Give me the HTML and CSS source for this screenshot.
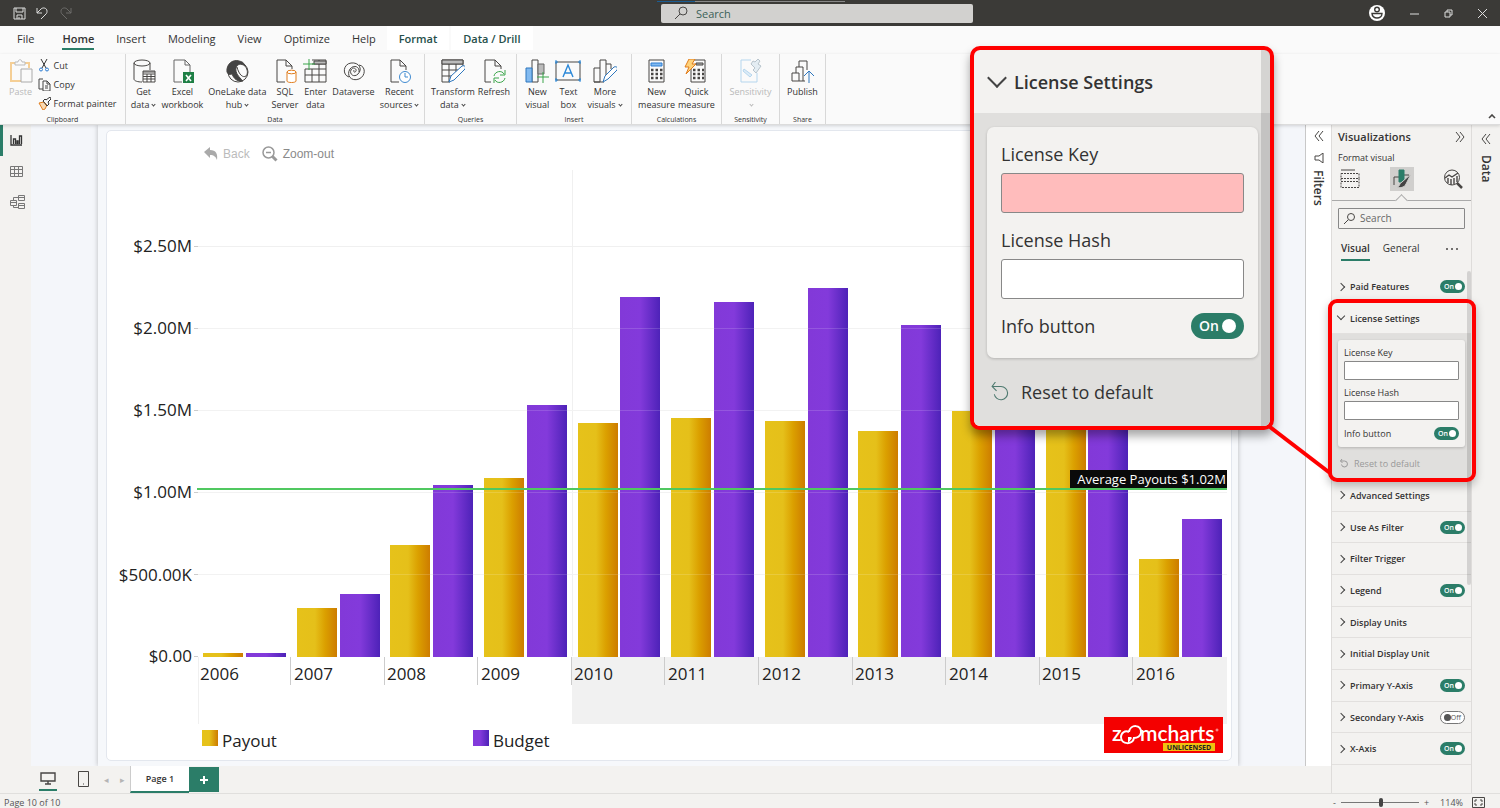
FILE: index.html
```html
<!DOCTYPE html>
<html lang="en">
  <head>
    <meta charset="utf-8" />
    <title>Report</title>
    <link rel="stylesheet" href="styles.css">
  </head>

  <body>
    <header class="titlebar">
      <div class="quick">
        <button aria-label="Save"><svg width="13" height="13" viewBox="0 0 13 13"><path d="M1 1h11v11H1zM3 1v4h7V1M4 12V8h5v4M6 10v2" /></svg></button>
        <button aria-label="Undo"><svg width="13" height="13" viewBox="0 0 13 13"><path d="M1 1v5h5M1 6l4-4c2-2 6-1 6 2 0 1 0 2-1 3l-5 5" /></svg></button>
        <button aria-label="Redo" class="dim"><svg width="13" height="13" viewBox="0 0 13 13"><path d="M12 1v5H7M12 6L8 2C6 0 2 1 2 4c0 1 0 2 1 3l5 5" /></svg></button>
      </div>
      <label class="top-search">
        <svg width="14" height="14" viewBox="0 0 14 14"><circle cx="9" cy="5" r="4" /><path d="M6 8l-5 5" /></svg>
        <input type="text" placeholder="Search" aria-label="Search" />
      </label>
      <div class="window-buttons">
        <button aria-label="Account"><svg width="16" height="16" viewBox="0 0 16 16"><circle cx="8" cy="8" r="8" fill="#fff" stroke="none" /><circle cx="8" cy="4.500" r="2.300" stroke="#3b3a37" stroke-width="1.400" /><path d="M3 8.500h10c0 6-10 6-10 0z" stroke="#3b3a37" stroke-width="1.400" /></svg></button>
        <button aria-label="Minimize"><svg width="9" height="9" viewBox="0 0 9 9"><path d="M0 5h9" /></svg></button>
        <button aria-label="Restore"><svg width="9" height="9" viewBox="0 0 9 9"><path d="M1 3h5v5H1zM3 3V1h5v5H6" /></svg></button>
        <button aria-label="Close"><svg width="9" height="9" viewBox="0 0 9 9"><path d="M0 0l9 9M9 0L0 9" /></svg></button>
      </div>
    </header>

    <nav class="tabs">
      <button>File</button>
      <button class="active">Home</button>
      <button>Insert</button>
      <button>Modeling</button>
      <button>View</button>
      <button>Optimize</button>
      <button>Help</button>
      <button class="context">Format</button>
      <button class="context">Data / Drill</button>
    </nav>

    <section class="ribbon">
      <div class="group clipboard">
        <div class="items">
          <button class="tool disabled">
            <svg width="24" height="24" viewBox="0 0 24 24"><path d="M6 4H2v18h10M16 4h4v5" stroke="#f5cf96" stroke-width="2" /><path d="M6 6V3h3c0-3 4-3 4 0h3v3z" stroke="#bbb" /><path d="M12 10h11v13H12z" stroke="#aaa" fill="#fafafa" /></svg>
            <span>Paste</span>
          </button>
          <div class="stack">
            <button><svg width="13" height="13" viewBox="0 0 13 13"><path d="M3 0l5 9M9 0L4 9" stroke="#333" /><circle cx="3" cy="10.500" r="1.500" stroke="#2b7cd3" /><circle cx="9" cy="10.500" r="1.500" stroke="#2b7cd3" /></svg>Cut</button>
            <button><svg width="13" height="13" viewBox="0 0 13 13"><path d="M5 11H1V1h4M5 3h4l3 3v7H5zM9 3v3h3M7 8h3M7 10h3" stroke="#444" /></svg>Copy</button>
            <button><svg width="13" height="13" viewBox="0 0 13 13"><path d="M1 6l5-1 3 3-2 4-2 1z" stroke="#e07c1c" fill="#fbd9b0" /><path d="M5 4l4 5 2-2-1-2 3-3-1-2-4 3-1-1z" stroke="#333" /></svg>Format painter</button>
          </div>
        </div>
        <small>Clipboard</small>
      </div>

      <div class="group data-group">
        <div class="items">
          <button class="tool"><svg width="24" height="24" viewBox="0 0 24 24"><ellipse cx="10" cy="4" rx="8" ry="3" /><path d="M2 4v16c0 2 4 3 8 3M18 4v7" /><path d="M11 12h12v11H11z" fill="#fff" /><path d="M11 15h12M11 17.500h12M11 20h12M15 15v8M19 15v8M11 13h12" /></svg><span>Get<br />data<i class="down"></i></span></button>
          <button class="tool"><svg width="24" height="24" viewBox="0 0 24 24"><path d="M12 23H4V1h11l5 5v7M15 1v5h5" stroke="#666" /><path d="M13 13h11v11H13z" fill="#1e7f45" stroke="none" /><path d="M16 16l5 6M21 16l-5 6" stroke="#fff" stroke-width="1.600" /></svg><span>Excel<br />workbook</span></button>
          <button class="tool"><svg width="24" height="24" viewBox="0 0 24 24"><circle cx="13" cy="13" r="10" /><path d="M2 13C1 5 8 0 14 2c4 1 4 1 6 5-4-3-8-2-9 2-1 5 3 9 7 13-8 1-10-5-11-7-1 0-3 2-5-2z" fill="#444" /><path d="M12 8c2 8 6 11 9 9M20 7c3 4 3 8 1 10" /></svg><span>OneLake data<br />hub<i class="down"></i></span></button>
          <button class="tool"><svg width="24" height="24" viewBox="0 0 24 24"><path d="M12 23H4V1h9l6 6v3M13 1v6h6" /><path d="M14 13v9c0 2 9 2 9 0v-9" stroke="#e07c1c" fill="#fff" /><ellipse cx="18.500" cy="13" rx="4.500" ry="1.800" stroke="#e07c1c" fill="#fff" /></svg><span>SQL<br />Server</span></button>
          <button class="tool"><svg width="24" height="24" viewBox="0 0 24 24"><path d="M9 1h14v22H2V10h21M2 16h21M9 10v13M16 1v22M9 5h14" /><path d="M11 2h12v3H11z" fill="#bbb" /><path d="M6 0v11M0 5h12" stroke="#3aa54a" /></svg><span>Enter<br />data</span></button>
          <button class="tool"><svg width="24" height="24" viewBox="0 0 24 24"><path d="M7 18c-7-2-6-13 2-14 8-1 12 6 7 11-4 4-9 0-7-4 2-4 6-1 5 1s-3 1-2-1" /><path d="M17 6c7 1 7 11 0 14-8 3-13-4-9-10 4-5 10-2 9 3" /></svg><span>Dataverse</span></button>
          <button class="tool"><svg width="24" height="24" viewBox="0 0 24 24"><path d="M12 23H4V1h9l6 6v4M13 1v6h6" /><circle cx="18" cy="18" r="5.500" stroke="#3f8ad0" fill="#fff" /><path d="M18 14v4h3" stroke="#3f8ad0" /></svg><span>Recent<br />sources<i class="down"></i></span></button>
        </div>
        <small>Data</small>
      </div>

      <div class="group queries">
        <div class="items">
          <button class="tool"><svg width="24" height="24" viewBox="0 0 24 24"><path d="M9 23H1V1h21v9M1 5h21M1 11h16M1 17h10M8 5v18M15 5v8" /><path d="M1 1h21v4H1z" fill="#bbb" /><path d="M8 23l2-6L21 7c3-1 4 1 3 3L13 21z" stroke="#2f77bd" fill="#fff" /></svg><span>Transform<br />data<i class="down"></i></span></button>
          <button class="tool"><svg width="24" height="24" viewBox="0 0 24 24"><path d="M9 23H3V1h10l6 6v3M13 1v6h6" /><path d="M12 17c1-5 8-6 10-2M23 11v5h-5M23 19c-1 5-8 6-10 2M12 24v-5h5" stroke="#3aa54a" /></svg><span>Refresh</span></button>
        </div>
        <small>Queries</small>
      </div>

      <div class="group insert">
        <div class="items">
          <button class="tool"><svg width="24" height="24" viewBox="0 0 24 24"><path d="M7 23V1h6v22z" /><path d="M1 9h6v14H1z" fill="#82baf0" stroke="#2f77bd" /><path d="M13 5h6v10h-6z" fill="#bbb" stroke="#666" /><path d="M18 13v11M12 18h12" stroke="#3aa54a" /></svg><span>New<br />visual</span></button>
          <button class="tool"><svg width="26" height="24" viewBox="0 0 26 24"><path d="M1 3h24v18H1z" /><path d="M0 2h2v2H0zM24 2h2v2h-2zM0 20h2v2H0zM24 20h2v2h-2z" stroke="#2b88d8" /><path d="M8 18L13 6l5 12M10 14h6" stroke="#2b88d8" stroke-width="1.400" /></svg><span>Text<br />box</span></button>
          <button class="tool"><svg width="24" height="24" viewBox="0 0 24 24"><path d="M7 23V1h6v18M7 23H1V9h6M13 5h5v5M1 23h10" /><path d="M10 23l2-6 9-9c3-1 4 1 3 3l-9 9z" stroke="#2f77bd" fill="#fff" /></svg><span>More<br />visuals<i class="down"></i></span></button>
        </div>
        <small>Insert</small>
      </div>

      <div class="group calc">
        <div class="items">
          <button class="tool"><svg width="24" height="24" viewBox="0 0 24 24"><path d="M4 1h15v22H4z" /><path d="M6 4h11v3H6z" fill="#82baf0" stroke="#2b7cd3" /><path d="M6 11h12M6 15h12M6 19h12" stroke-width="2.500" stroke-dasharray="2.500 2" /></svg><span>New<br />measure</span></button>
          <button class="tool"><svg width="24" height="24" viewBox="0 0 24 24"><path d="M7 1h14v22H7z" /><path d="M12 4h7v2h-7z" fill="#bbb" /><path d="M9 11h11M9 15h11M9 19h11" stroke-width="2.500" stroke-dasharray="2.500 2" /><path d="M5 0h6L8 5h4L2 15l3-7H1z" stroke="#e07c1c" fill="#ffd27a" /></svg><span>Quick<br />measure</span></button>
        </div>
        <small>Calculations</small>
      </div>

      <div class="group sens">
        <div class="items">
          <button class="tool disabled"><svg width="24" height="24" viewBox="0 0 24 24"><path d="M13 1H3v22h16V14" stroke="#b5d6ee" /><path d="M13 5l4 4-2 2 3 3 5-7-3-2 2-3-2-2-3 3-2-1z" stroke="#b8c4cc" fill="#e4edf3" /><path d="M6 10l8 6-2 2-7-6z" stroke="#b5d6ee" fill="#dcebf6" /></svg><span>Sensitivity<br /><i class="down"></i></span></button>
        </div>
        <small>Sensitivity</small>
      </div>

      <div class="group share">
        <div class="items">
          <button class="tool"><svg width="24" height="24" viewBox="0 0 24 24"><path d="M9 8V2h8v9M6 14V8h7v14M2 14h7v8H2zM9 22h6" /><path d="M19 24V12M14 17l5-5 5 5" stroke="#2f77bd" /></svg><span>Publish</span></button>
        </div>
        <small>Share</small>
      </div>
      <button class="collapse" aria-label="Collapse ribbon"><svg width="8" height="5" viewBox="0 0 8 5"><path d="M1 4l3-3 3 3" stroke-width="1.600" /></svg></button>
    </section>

    <main class="workspace">
      <div class="left">
        <div class="editor">
          <nav class="rail">
            <button class="active" aria-label="Report view"><svg width="13" height="13" viewBox="0 0 13 13"><path d="M1 1v10h11M3.500 10V5h2v5M7 10V7h1v3M9.500 10V2h2v8" stroke-width="1.300" /></svg></button>
            <button aria-label="Table view"><svg width="13" height="13" viewBox="0 0 13 13"><path d="M.5 1.500h12v10H.5zM0 4.500h13M0 8.500h13M4.500 1v11M8.500 1v11" /></svg></button>
            <button aria-label="Model view"><svg width="15" height="15" viewBox="0 0 15 15"><path d="M.5 5.500h6v5h-6zM0 7.500h6M8.500.5h6v5h-6zM8 2.500h6M8.500 8.500h6v5h-6zM8 10.500h6M3.500 5V2.500h5M3.500 10v2.500h5" /></svg></button>
          </nav>

          <div class="canvas">
            <div class="sheet">
              <div class="card">
                <div class="chart-tools">
                  <button class="back"><svg width="14" height="14" viewBox="0 0 14 14"><path d="M0 5l6-5v3c6 0 8 4 7 10-1-3-3-5-7-5v3z" fill="#aaa" stroke="none" /></svg>Back</button>
                  <button><svg width="16" height="16" viewBox="0 0 16 16"><circle cx="6.500" cy="6.500" r="5.500" stroke-width="1.500" /><path d="M4 6.500h5" stroke-width="1.500" /><path d="M10.500 10.500l4 4" stroke-width="3" /></svg>Zoom-out</button>
                </div>

                <svg class="chart" viewBox="107 165 1124 560" role="img" aria-label="Payout and budget by year">
                  <defs>
                    <linearGradient id="gold"><stop offset="0" stop-color="#e6c21a" /><stop offset=".45" stop-color="#e5c01a" /><stop offset=".7" stop-color="#dba000" /><stop offset="1" stop-color="#cd7c00" /></linearGradient>
                    <linearGradient id="violet"><stop offset="0" stop-color="#8239d8" /><stop offset=".5" stop-color="#833adb" /><stop offset="1" stop-color="#4d22b8" /></linearGradient>
                  </defs>
                  <rect class="shade" x="572" y="657" width="655" height="67" />
                  <path class="grid" d="M198 574.500h1029M198 492.500h1029M198 410.500h1029M198 328.500h1029M198 246.500h1029M572.500 170v486M198.500 657v67" />
                  <path class="tick" d="M194 656.500h4M194 574.500h4M194 492.500h4M194 410.500h4M194 328.500h4M194 246.500h4" />
                  <path class="tick" d="M290.500 657v28M384.500 657v28M477.500 657v28M571.500 657v28M664.500 657v28M758.500 657v28M852.500 657v28M945.500 657v28M1039.500 657v28M1132.500 657v28" />

                  <g fill="url(#gold)">
                    <rect x="203" y="653" width="40" height="4" />
                    <rect x="297" y="608" width="40" height="49" />
                    <rect x="390" y="545" width="40" height="112" />
                    <rect x="484" y="478" width="40" height="179" />
                    <rect x="578" y="423" width="40" height="234" />
                    <rect x="671" y="418" width="40" height="239" />
                    <rect x="765" y="421" width="40" height="236" />
                    <rect x="858" y="431" width="40" height="226" />
                    <rect x="952" y="411" width="40" height="246" />
                    <rect x="1046" y="404" width="40" height="253" />
                    <rect x="1139" y="559" width="40" height="98" />
                  </g>
                  <g fill="url(#violet)">
                    <rect x="246" y="653" width="40" height="4" />
                    <rect x="340" y="594" width="40" height="63" />
                    <rect x="433" y="485" width="40" height="172" />
                    <rect x="527" y="405" width="40" height="252" />
                    <rect x="620" y="297" width="40" height="360" />
                    <rect x="714" y="302" width="40" height="355" />
                    <rect x="808" y="288" width="40" height="369" />
                    <rect x="901" y="325" width="40" height="332" />
                    <rect x="995" y="330" width="40" height="327" />
                    <rect x="1088" y="340" width="40" height="317" />
                    <rect x="1182" y="519" width="40" height="138" />
                  </g>
                  <path class="grid over" d="M198 574.500h1029M198 492.500h1029M198 410.500h1029M198 328.500h1029" />
                  <path class="average" d="M197 489h1030" />
                  <rect x="1070" y="470" width="157" height="18" fill="#0a0a0a" />
                  <text class="average-text" x="1226" y="484">Average Payouts $1.02M</text>

                  <g class="y-labels">
                    <text x="192" y="252">$2.50M</text>
                    <text x="192" y="334">$2.00M</text>
                    <text x="192" y="416">$1.50M</text>
                    <text x="192" y="498">$1.00M</text>
                    <text x="192" y="581">$500.00K</text>
                    <text x="192" y="662">$0.00</text>
                  </g>
                  <g class="x-labels">
                    <text x="200" y="680">2006</text>
                    <text x="294" y="680">2007</text>
                    <text x="387" y="680">2008</text>
                    <text x="481" y="680">2009</text>
                    <text x="574" y="680">2010</text>
                    <text x="668" y="680">2011</text>
                    <text x="762" y="680">2012</text>
                    <text x="855" y="680">2013</text>
                    <text x="949" y="680">2014</text>
                    <text x="1042" y="680">2015</text>
                    <text x="1136" y="680">2016</text>
                  </g>
                </svg>

                <div class="legend">
                  <span><i class="swatch gold"></i>Payout</span>
                  <span><i class="swatch violet"></i>Budget</span>
                </div>

                <svg class="logo" width="119" height="36" viewBox="0 0 119 36" role="img" aria-label="ZoomCharts unlicensed">
                  <rect width="119" height="36" fill="#f40000" />
                  <text x="8" y="24" class="logo-text">z</text>
                  <path d="M25 15c-4-2-8 1-8 5 0 8 12 8 13 1 4 0 6-2 7-5 1-9-11-9-12-1" stroke="#fff" stroke-width="2" />
                  <path d="M24 20v5h1l3-4-1-1z" fill="#fff" stroke="none" />
                  <text x="36" y="24" class="logo-text">mcharts</text>
                  <circle cx="113" cy="13" r="1" stroke="#ffb0b0" />
                  <rect x="59" y="26" width="52" height="8" fill="#f0c010" />
                  <text x="85" y="33" class="logo-tag">UNLICENSED</text>
                </svg>
              </div>
            </div>
          </div>

          <aside class="filters">
            <button aria-label="Expand filters"><svg width="10" height="10" viewBox="0 0 10 10"><path d="M5 0L1 5l4 5M9 0L5 5l4 5" /></svg></button>
            <svg width="10" height="10" viewBox="0 0 10 10"><path d="M9 0v10L5 7H1V3h4z" /></svg>
            <span>Filters</span>
          </aside>
        </div>

        <footer class="pagebar">
          <button class="device active" aria-label="Desktop layout"><svg width="16" height="13" viewBox="0 0 16 13"><path d="M1 1h14v8H1zM8 9v3M5 12h6" stroke-width="1.400" /></svg></button>
          <button class="device" aria-label="Mobile layout"><svg width="11" height="16" viewBox="0 0 11 16"><path d="M.5.5h10v15H.5zM5 13h1" /></svg></button>
          <button class="arrow" aria-label="Previous page">◂</button>
          <button class="arrow" aria-label="Next page">▸</button>
          <button class="page">Page 1</button>
          <button class="add" aria-label="New page"><svg width="10" height="10" viewBox="0 0 10 10"><path d="M5 1v8M1 5h8" stroke="#fff" stroke-width="2" /></svg></button>
        </footer>
      </div>

      <aside class="viz">
        <div class="viz-head">
          <h2>Visualizations</h2>
          <button aria-label="Collapse pane"><svg width="10" height="10" viewBox="0 0 10 10"><path d="M1 0l4 5-4 5M5 0l4 5-4 5" /></svg></button>
        </div>
        <p>Format visual</p>
        <div class="modes">
          <button aria-label="Build visual"><svg width="20" height="20" viewBox="0 0 20 20"><path d="M1 1h14" /><path d="M1 4.500h18v5H1zM1 12.500h18v6H1zM1 9.500v3M19 9.500v3" stroke-dasharray="2 1" /></svg></button>
          <button class="active" aria-label="Format visual"><svg width="20" height="20" viewBox="0 0 20 20"><path d="M2 16V8h5M12 6h5v2" /><path d="M7 1h5v12H7z" fill="#2b7d68" stroke="#2b7d68" /><path d="M5 18c3 0 2-4 5-5l9-8-5 10c-2 4-6 4-9 3z" fill="#444" stroke="#d0cfcd" /></svg></button>
          <button aria-label="Analytics"><svg width="20" height="20" viewBox="0 0 20 20"><circle cx="9" cy="8.500" r="7.500" /><path d="M2 9l4-3 3 2 6-4M5 9v5M8 10v6M11 9v6M14 7v6" stroke-width="1.400" /><path d="M14 14l5 5" stroke-width="2.500" /></svg></button>
        </div>
        <label class="viz-search">
          <svg width="11" height="11" viewBox="0 0 11 11"><circle cx="7" cy="4" r="3.500" /><path d="M4 7l-4 4" /></svg>
          <input type="text" placeholder="Search" aria-label="Search settings" />
        </label>
        <div class="viz-tabs">
          <button class="active">Visual</button>
          <button>General</button>
          <button class="more" aria-label="More options"><svg width="12" height="2" viewBox="0 0 12 2"><path d="M0 1h2M5 1h2M10 1h2" stroke-width="1.500" /></svg></button>
        </div>

        <div class="settings">
          <div class="row first"><button><i class="chev"></i>Paid Features</button><label class="toggle">On<input type="checkbox" checked aria-label="Paid Features" /></label></div>

          <div class="license">
            <div class="row"><button><i class="chev open"></i>License Settings</button></div>
            <div class="license-body">
              <div class="fields">
                <label for="key">License Key</label>
                <input type="text" id="key" />
                <label for="hash">License Hash</label>
                <input type="text" id="hash" />
                <div class="info"><label for="info">Info button</label><label class="toggle">On<input type="checkbox" id="info" checked /></label></div>
              </div>
              <button class="reset"><svg width="9" height="9" viewBox="0 0 18 18"><path d="M1 4h8a6 6 0 1 1-6 7M4 0L1 4l4 4" stroke-width="2" /></svg>Reset to default</button>
            </div>
          </div>

          <div class="row"><button><i class="chev"></i>Advanced Settings</button></div>
          <div class="row"><button><i class="chev"></i>Use As Filter</button><label class="toggle">On<input type="checkbox" checked aria-label="Use As Filter" /></label></div>
          <div class="row"><button><i class="chev"></i>Filter Trigger</button></div>
          <div class="row"><button><i class="chev"></i>Legend</button><label class="toggle">On<input type="checkbox" checked aria-label="Legend" /></label></div>
          <div class="row"><button><i class="chev"></i>Display Units</button></div>
          <div class="row"><button><i class="chev"></i>Initial Display Unit</button></div>
          <div class="row"><button><i class="chev"></i>Primary Y-Axis</button><label class="toggle">On<input type="checkbox" checked aria-label="Primary Y-Axis" /></label></div>
          <div class="row"><button><i class="chev"></i>Secondary Y-Axis</button><label class="toggle off">Off<input type="checkbox" aria-label="Secondary Y-Axis" /></label></div>
          <div class="row"><button><i class="chev"></i>X-Axis</button><label class="toggle">On<input type="checkbox" checked aria-label="X-Axis" /></label></div>
          <i class="scrollbar"></i>
        </div>
      </aside>

      <aside class="data-pane">
        <button aria-label="Expand data"><svg width="10" height="10" viewBox="0 0 10 10"><path d="M5 0L1 5l4 5M9 0L5 5l4 5" /></svg></button>
        <span>Data</span>
      </aside>
    </main>

    <footer class="status">
      <span>Page 10 of 10</span>
      <div class="zoom">
        <button aria-label="Zoom out">-</button>
        <input type="range" min="0" max="100" value="52" aria-label="Zoom" />
        <button aria-label="Zoom in">+</button>
        <span>114%</span>
        <button aria-label="Fit to page"><svg width="13" height="11" viewBox="0 0 13 11"><path d="M.5.5h12v10H.5z" /><path d="M3 5V3h2M8 3h2v2M10 6v2H8M5 8H3V6" /></svg></button>
      </div>
    </footer>

    <!-- enlarged license settings -->
    <section class="callout">
      <h3><i class="chev open"></i>License Settings</h3>
      <div class="license-body">
        <div class="fields">
          <label for="key-big">License Key</label>
          <input type="text" id="key-big" class="invalid" />
          <label for="hash-big">License Hash</label>
          <input type="text" id="hash-big" />
          <div class="info"><label for="info-big">Info button</label><label class="toggle">On<input type="checkbox" id="info-big" checked /></label></div>
        </div>
        <button class="reset"><svg width="20" height="20" viewBox="0 0 18 18"><path d="M1 4h8a6 6 0 1 1-6 7M4 0L1 4l4 4" stroke="#4f7a70" /></svg>Reset to default</button>
      </div>
    </section>
    <svg class="connector" width="64" height="50" viewBox="0 0 64 50"><path d="M2 2l60 46" stroke="#f00" stroke-width="4" /></svg>
  </body>
</html>
```
FILE: styles.css
```css
* {
  box-sizing: border-box;
}
body {
  margin: 0;
  height: 100vh;
  display: flex;
  flex-direction: column;
  position: relative;
  overflow: hidden;
  background: #f3f2f0;
  color: #333;
  font: 9px/13px "Open Sans", "Noto Sans", sans-serif;
}
button,
input {
  font: inherit;
  color: inherit;
  margin: 0;
}
button {
  background: none;
  border: none;
  padding: 0;
}
svg {
  display: block;
  flex-shrink: 0;
  fill: none;
  stroke: #484644;
}
text {
  stroke: none;
  fill: #222;
}
h2,
h3,
p {
  margin: 0;
}

/* title bar */
.titlebar {
  display: grid;
  grid-template-columns: 1fr 312px 1fr;
  align-items: center;
  height: 26px;
  flex-shrink: 0;
  padding-left: 13px;
  padding-right: 13px;
  background: #3b3a37;
}
.titlebar > div svg {
  stroke: #ddd;
}
.quick,
.window-buttons {
  display: flex;
  align-items: center;
}
.quick {
  gap: 10px;
}
.quick .dim {
  opacity: 0.3;
}
.window-buttons {
  justify-content: flex-end;
  gap: 25px;
}
.top-search {
  position: relative;
  left: 67px;
  display: flex;
  align-items: center;
  gap: 8px;
  height: 19px;
  padding-left: 13px;
  background: #d2d1cf;
  border-radius: 2px;
}
.top-search input {
  flex: 1;
  min-width: 0;
  border: none;
  background: none;
  padding: 0;
  font-size: 11px;
}
.top-search input::placeholder {
  color: #3c6158;
}
.top-search::before {
  content: "";
  position: absolute;
  top: -3px;
  left: -4px;
  width: 188px;
  height: 1px;
  background: linear-gradient(to right, #1b5d93 38px, #888 38px);
}

/* tabs */
.tabs {
  display: flex;
  height: 28px;
  flex-shrink: 0;
  padding-left: 6px;
  background: #fafafa;
  font-size: 11px;
}
.tabs button {
  height: 24px;
  padding: 2px 11px 0;
  border-bottom: 2px solid transparent;
}
.tabs .active {
  padding: 2px 0 0;
  margin: 0 11px 0 17px;
  font-weight: 600;
  border-color: #2b7d68;
}
.tabs .context {
  padding: 2px 12px 0;
  margin-right: 2px;
  background: #fff;
  font-weight: 600;
  color: #264f4a;
}

/* ribbon */
.ribbon {
  position: relative;
  display: flex;
  height: 71px;
  flex-shrink: 0;
  background: #fafafa;
  border-bottom: 1px solid #dcdcdc;
  box-shadow: 0 1px 3px rgba(0, 0, 0, 0.15);
  z-index: 1;
}
.group {
  display: flex;
  flex-direction: column;
  justify-content: space-between;
  align-items: center;
  padding-top: 5px;
  border-right: 1px solid #d8d8d8;
}
.group small {
  font-size: 7px;
  line-height: 9px;
}
.items {
  display: flex;
  justify-content: center;
  gap: 5px;
  white-space: nowrap;
}
.tool {
  display: flex;
  flex-direction: column;
  align-items: center;
  gap: 2px;
}
.tool.disabled {
  color: #b9b9b9;
}
.stack {
  display: flex;
  flex-direction: column;
  gap: 6px;
}
.stack button {
  display: flex;
  align-items: center;
  gap: 3px;
}
.clipboard {
  width: 126px;
}
.data-group {
  width: 299px;
}
.queries {
  width: 92px;
}
.queries .items,
.calc .items {
  gap: 3px;
}
.insert {
  width: 115px;
}
.insert .items {
  gap: 6px;
}
.calc {
  width: 90px;
}
.sens {
  width: 58px;
}
.share {
  width: 46px;
}
.down {
  display: inline-block;
  width: 3px;
  height: 3px;
  margin: 0 1px 2px 3px;
  border: solid #444;
  border-width: 0 1px 1px 0;
  transform: rotate(45deg);
}
.disabled .down {
  border-color: #b9b9b9;
}
.collapse {
  margin: auto 4px 5px auto;
}

/* workspace */
.workspace {
  flex: 1;
  min-height: 0;
  display: flex;
}
.left {
  flex: 1;
  min-width: 0;
  display: flex;
  flex-direction: column;
}
.editor {
  flex: 1;
  min-height: 0;
  display: flex;
}
.rail {
  width: 31px;
  display: flex;
  flex-direction: column;
}
.rail button {
  display: flex;
  align-items: center;
  height: 31px;
  padding-left: 10px;
}
.rail svg {
  stroke: #777;
}
.rail .active {
  padding-left: 7px;
  border-left: 3px solid #2b7d68;
}
.rail .active svg {
  stroke: #333;
}
.canvas {
  flex: 1;
  min-width: 0;
  display: flex;
  padding: 0 67px;
  background: #f4f6fa;
  border-right: 1px solid #c8c8c8;
}
.sheet {
  flex: 1;
  min-width: 0;
  display: flex;
  padding: 5px 6px 5px 8px;
  background: #f6f8fb;
  box-shadow: 0 0 5px rgba(0, 0, 0, 0.25);
  clip-path: inset(0 -8px);
}
.card {
  position: relative;
  flex: 1;
  min-width: 0;
  display: flex;
  flex-direction: column;
  background: #fff;
  border: 1px solid #e3e7ee;
  border-radius: 5px;
}
.chart-tools {
  display: flex;
  gap: 12px;
  height: 34px;
  padding: 11px 0 0 97px;
  font: 12px/24px "Liberation Sans", Arial, sans-serif;
  color: #8a8a8a;
}
.chart-tools button {
  display: flex;
  align-items: center;
  gap: 5px;
}
.chart-tools svg {
  stroke: #999;
}
.chart-tools .back {
  color: #bbb;
}
.chart {
  flex: 1;
  min-height: 0;
  width: 100%;
  font-size: 17px;
}
.grid {
  stroke: #f0f0f0;
}
.grid.over {
  stroke: rgba(255, 255, 255, 0.15);
}
.tick {
  stroke: #ccc;
}
.shade {
  fill: #f1f1f1;
}
.chart rect {
  stroke: none;
}
.average {
  stroke: #50c860;
  stroke-width: 2;
}
.average-text {
  fill: #fff;
  font-size: 13px;
  text-anchor: end;
}
.y-labels {
  text-anchor: end;
}
.legend {
  display: flex;
  gap: 196px;
  height: 35px;
  padding-left: 95px;
  color: #222;
  font-size: 17px;
  line-height: 31px;
}
.legend span {
  display: flex;
  gap: 4px;
}
.swatch {
  width: 16px;
  height: 16px;
  margin-top: 5px;
}
.swatch.gold {
  background: linear-gradient(to right, #e6c21a 45%, #cd7c00);
}
.swatch.violet {
  background: linear-gradient(to right, #833adb 45%, #4d22b8);
}
.logo {
  position: absolute;
  right: 8px;
  bottom: 7px;
}
.logo rect {
  stroke: none;
}
.logo-text {
  fill: #fff;
  font-size: 21px;
  font-weight: 600;
  font-family: Lato, sans-serif;
}
.logo-tag {
  font-size: 7px;
  font-weight: bold;
  text-anchor: middle;
}

/* side panes */
.filters {
  width: 25px;
  display: flex;
  flex-direction: column;
  align-items: center;
  gap: 7px;
  padding-top: 6px;
  background: #fff;
}
.filters > svg {
  margin-top: 5px;
}
.filters span,
.data-pane span {
  writing-mode: vertical-rl;
  font-size: 12px;
  font-weight: 600;
}
.data-pane {
  width: 29px;
  display: flex;
  flex-direction: column;
  align-items: center;
  gap: 11px;
  padding-top: 9px;
  border-left: 1px solid #dedcda;
}
.viz {
  width: 140px;
  display: flex;
  flex-direction: column;
  padding-bottom: 28px;
  border-left: 1px solid #dedcda;
}
.viz-head {
  display: flex;
  justify-content: space-between;
  align-items: center;
  height: 23px;
  padding: 0 6px;
}
.viz-head h2 {
  font-size: 11px;
  font-weight: 600;
}
.viz p {
  padding: 3px 6px 0;
}
.modes {
  display: flex;
  justify-content: space-between;
  padding: 3px 6px 9px;
  border-bottom: 1px solid #aaa;
  position: relative;
}
.modes button {
  padding: 2px;
}
.modes .active {
  background: #d0cfcd;
}
.modes::after {
  content: "";
  position: absolute;
  left: 65px;
  bottom: -5px;
  width: 8px;
  height: 8px;
  background: #f3f2f0;
  border: solid #aaa;
  border-width: 1px 0 0 1px;
  transform: rotate(45deg);
}
.viz-search {
  display: flex;
  align-items: center;
  gap: 5px;
  height: 21px;
  margin: 7px 6px 0;
  padding: 0 5px;
  border: 1px solid #888;
  border-radius: 1px;
  position: relative;
}
.viz-search input {
  flex: 1;
  min-width: 0;
  padding: 0;
  border: none;
  background: none;
  font-size: 10px;
}
.viz-search input::placeholder {
  color: #666;
}
.viz-tabs {
  display: flex;
  gap: 13px;
  height: 41px;
  padding: 9px 9px;
  font-size: 10px;
}
.viz-tabs button {
  border-bottom: 2px solid transparent;
}
.viz-tabs .active {
  font-weight: 600;
  border-color: #2b7d68;
}
.viz-tabs .more {
  margin: 0 4px 0 auto;
}
.settings {
  position: relative;
  flex: 1;
  display: flex;
  flex-direction: column;
}
.row {
  flex: 1;
  display: flex;
  justify-content: space-between;
  align-items: center;
  padding: 0 6px;
  border-bottom: 1px solid #e2e0de;
}
.row.first {
  flex: 0 0 33px;
  border: none;
}
.row button {
  display: flex;
  align-items: center;
  gap: 6px;
  font-weight: 600;
}
.chev {
  width: 6px;
  height: 6px;
  border: solid #444;
  border-width: 1px 1px 0 0;
  transform: rotate(45deg);
}
.chev.open {
  margin-bottom: 4px;
  transform: rotate(135deg);
}
.scrollbar {
  position: absolute;
  top: 1px;
  right: 0;
  width: 4px;
  height: 314px;
  border-radius: 2px;
  background: rgba(0, 0, 0, 0.13);
}

.toggle {
  display: flex;
  align-items: center;
  justify-content: space-between;
  width: 25px;
  height: 13px;
  padding: 0 3px 0 4px;
  border-radius: 7px;
  background: #2b7d68;
  color: #fff;
  font-size: 7px;
  font-weight: 600;
}
.toggle input {
  appearance: none;
  width: 7px;
  height: 7px;
  border-radius: 50%;
  background: #fff;
}
.toggle.off {
  flex-direction: row-reverse;
  padding: 0 3px;
  background: #fff;
  border: 1px solid #777;
  color: #555;
  font-weight: 400;
}
.toggle.off input {
  background: #555;
}

/* license settings */
.license {
  position: relative;
  height: 177px;
  display: flex;
  flex-direction: column;
}
.license .row {
  flex: 0 0 31px;
}
.license::after {
  content: "";
  position: absolute;
  inset: -4px -5px -2px -4px;
  border: 4px solid #f00;
  border-radius: 9px;
  box-shadow: 0 4px 8px rgba(0, 0, 0, 0.25);
  pointer-events: none;
  z-index: 2;
}
.license-body {
  flex: 1;
  padding: 6px;
  background: #e0dfdd;
}
.fields {
  padding: 6px;
  background: #f3f2f0;
  border-radius: 3px;
  box-shadow: 0 1px 3px rgba(0, 0, 0, 0.2);
  color: #333;
}
.fields > label {
  display: block;
}
.fields > input {
  display: block;
  width: 100%;
  height: 19px;
  margin: 2px 0 6px;
  border: 1px solid #888;
  border-radius: 1px;
  background: #fff;
}
.info {
  display: flex;
  justify-content: space-between;
  align-items: center;
  height: 15px;
}
.reset {
  display: flex;
  align-items: center;
  gap: 5px;
  margin: 10px 0 0 2px;
}
.license .reset {
  color: #999;
}
.license .reset svg {
  stroke: #999;
}

/* bottom bars */
.pagebar {
  display: flex;
  align-items: center;
  height: 27px;
  flex-shrink: 0;
  padding-left: 39px;
}
.device {
  display: flex;
  justify-content: center;
  align-items: center;
  width: 18px;
  height: 23px;
  margin-right: 6px;
  border-bottom: 2px solid transparent;
}
.device.active {
  margin-right: 17px;
  border-color: #2b7d68;
}
.arrow {
  width: 16px;
  color: #b5b5b5;
}
.page {
  width: 59px;
  height: 27px;
  background: #fff;
  border-left: 1px solid #ccc;
  border-bottom: 2px solid #2b7d68;
  font-weight: 600;
}
.add {
  display: flex;
  justify-content: center;
  align-items: center;
  width: 30px;
  height: 25px;
  background: #2b7d68;
}
.status {
  display: flex;
  justify-content: space-between;
  align-items: center;
  height: 15px;
  flex-shrink: 0;
  padding: 3px 15px 0 4px;
  border-top: 1px solid #e0dfdd;
  color: #555;
}
.zoom {
  display: flex;
  align-items: center;
}
.zoom input {
  appearance: none;
  width: 78px;
  height: 9px;
  margin: 0 5px;
  background: linear-gradient(#777, #777) center / 100% 1px no-repeat;
}
.zoom input::-webkit-slider-thumb {
  appearance: none;
  width: 4px;
  height: 9px;
  border-radius: 2px;
  background: #444;
}
.zoom span {
  margin: 0 9px 0 11px;
}

/* enlarged panel */
.callout {
  position: absolute;
  top: 46px;
  right: 226px;
  width: 304px;
  height: 384px;
  display: flex;
  flex-direction: column;
  overflow: hidden;
  border: 4px solid #f00;
  border-radius: 10px;
  background: #f3f2f0;
  box-shadow: 0 6px 10px rgba(0, 0, 0, 0.35);
  font-size: 18px;
  line-height: 26px;
  z-index: 3;
}
.callout::after {
  content: "";
  position: absolute;
  inset: 0 0 0 auto;
  width: 9px;
  background: rgba(0, 0, 0, 0.12);
}
.callout h3 {
  display: flex;
  align-items: center;
  gap: 10px;
  height: 63px;
  padding: 0 16px;
  font-size: 18px;
  font-weight: 600;
}
.callout .chev {
  width: 14px;
  height: 14px;
  margin-bottom: 8px;
  border-width: 2px 2px 0 0;
}
.callout .license-body {
  padding: 14px 12px 0 13px;
}
.callout .fields {
  height: 231px;
  padding: 14px;
  border-radius: 7px;
}
.callout .fields > input {
  height: 40px;
  margin: 6px 0 14px;
  border-radius: 3px;
}
.callout .fields > .invalid {
  background: #ffbcbc;
}
.callout .info {
  height: 26px;
}
.callout .toggle {
  width: 53px;
  height: 26px;
  padding: 0 8px;
  border-radius: 13px;
  font-size: 14px;
}
.callout .toggle input {
  width: 14px;
  height: 14px;
}
.callout .reset {
  gap: 10px;
  margin: 21px 0 0 4px;
}
.connector {
  position: absolute;
  top: 425px;
  right: 168px;
  z-index: 4;
}
```
